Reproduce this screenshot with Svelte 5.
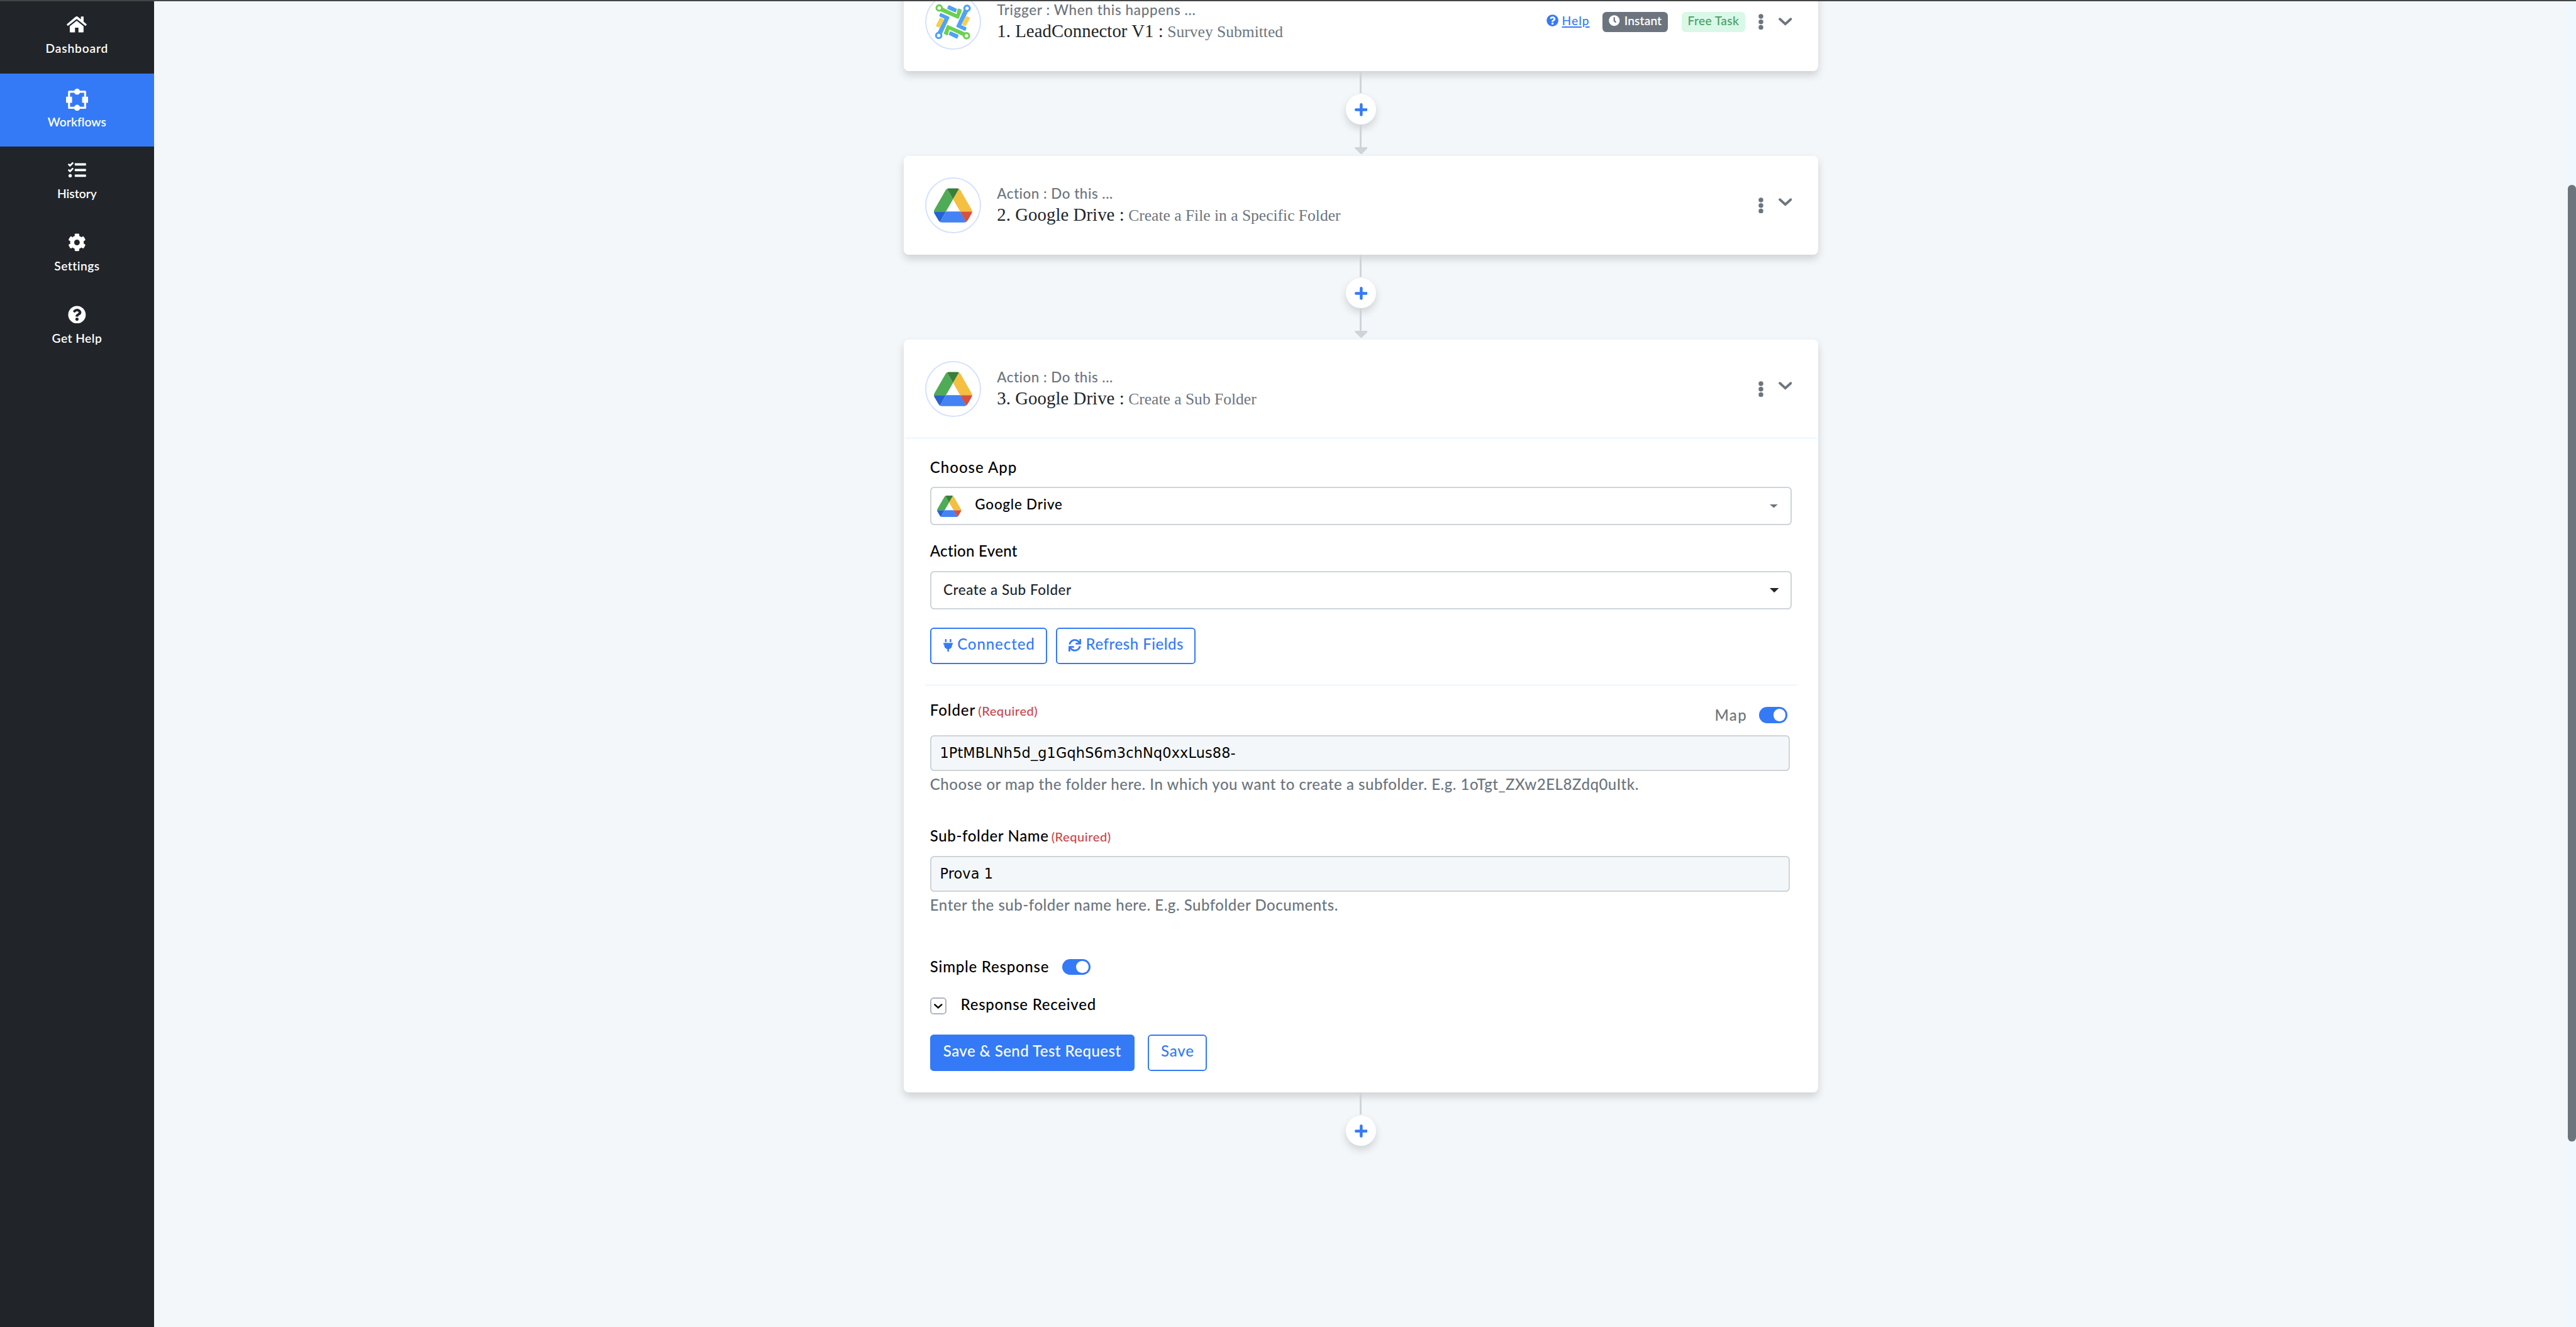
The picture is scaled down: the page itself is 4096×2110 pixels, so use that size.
<script>
  const nav = [
    { id: 'dashboard', label: 'Dashboard' },
    { id: 'workflows', label: 'Workflows', active: true },
    { id: 'history', label: 'History' },
    { id: 'settings', label: 'Settings' },
    { id: 'help', label: 'Get Help' }
  ];

  const helpPath =
    'M504 256c0 136.997-111.043 248-248 248S8 392.997 8 256C8 119.083 119.043 8 256 8s248 111.083 248 248zM262.655 90c-54.497 0-89.255 22.957-116.549 63.758-3.536 5.286-2.353 12.415 2.715 16.258l34.699 26.31c5.205 3.947 12.621 3.008 16.665-2.122 17.864-22.658 30.113-35.797 57.303-35.797 20.429 0 45.698 13.148 45.698 32.958 0 14.976-12.363 22.667-32.534 33.976C247.128 238.528 216 254.941 216 296v4c0 6.627 5.373 12 12 12h56c6.627 0 12-5.373 12-12v-1.333c0-28.462 83.186-29.647 83.186-106.667 0-58.002-60.165-102-116.531-102zM256 338c-25.365 0-46 20.635-46 46 0 25.364 20.635 46 46 46s46-20.636 46-46c0-25.365-20.635-46-46-46z';
</script>

{#snippet navIcon(id)}
  {#if id === 'dashboard'}
    <svg class="i-home" viewBox="0 0 40 32" fill="currentColor">
      <path d="M0.4 15.6 17.6 1q2.4-1.9 4.8 0l5.9 4.9V0.8q0-.6.6-.6h4.2q.6 0 .6.6v9.8l5.9 5q.6.5.1 1.1l-1.5 1.8q-.5.6-1.1.1L20 5.2 2.9 18.6q-.6.5-1.1-.1L.3 16.7q-.5-.6.1-1.1z" />
      <path d="M6.2 19.6 20 8.6l13.6 11V31q0 1-1 1h-9.2v-9.4h-6.8V32H7.2q-1 0-1-1z" />
    </svg>
  {:else if id === 'workflows'}
    <svg class="i-flow" viewBox="0 0 44 44" fill="currentColor">
      <rect x="6" y="6" width="32" height="32" fill="none" stroke="currentColor" stroke-width="4" stroke-linejoin="round" />
      <circle cx="22" cy="6" r="6" />
      <circle cx="22" cy="38" r="6" />
      <rect y="16" width="12" height="12" />
      <rect x="32" y="16" width="12" height="12" />
    </svg>
  {:else if id === 'history'}
    <svg class="i-nav" viewBox="0 0 512 512" fill="currentColor"><path d="M139.61 35.5a12 12 0 0 0-17 0L58.93 98.81l-22.7-22.12a12 12 0 0 0-17 0L3.53 92.41a12 12 0 0 0 0 17l47.59 47.4a12.78 12.78 0 0 0 17.61 0l15.59-15.62L156.52 69a12.09 12.09 0 0 0 .09-17zm0 159.19a12 12 0 0 0-17 0l-63.68 63.72-22.7-22.1a12 12 0 0 0-17 0L3.53 252a12 12 0 0 0 0 17L51 316.5a12.77 12.77 0 0 0 17.6 0l15.7-15.69 72.2-72.22a12 12 0 0 0 .09-16.9zM64 368c-26.49 0-48.59 21.5-48.59 48S37.53 464 64 464a48 48 0 0 0 0-96zm432 16H208a16 16 0 0 0-16 16v32a16 16 0 0 0 16 16h288a16 16 0 0 0 16-16v-32a16 16 0 0 0-16-16zm0-320H208a16 16 0 0 0-16 16v32a16 16 0 0 0 16 16h288a16 16 0 0 0 16-16V80a16 16 0 0 0-16-16zm0 160H208a16 16 0 0 0-16 16v32a16 16 0 0 0 16 16h288a16 16 0 0 0 16-16v-32a16 16 0 0 0-16-16z" /></svg>
  {:else if id === 'settings'}
    <svg class="i-nav" viewBox="0 0 512 512" fill="currentColor"><path d="M487.4 315.7l-42.6-24.6c4.3-23.2 4.3-47 0-70.2l42.6-24.6c4.9-2.8 7.1-8.6 5.5-14-11.1-35.6-30-67.8-54.7-94.6-3.8-4.1-10-5.1-14.8-2.3L380.8 110c-17.9-15.4-38.5-27.3-60.8-35.1V25.8c0-5.6-3.9-10.5-9.4-11.7-36.7-8.2-74.3-7.8-109.2 0-5.5 1.2-9.4 6.1-9.4 11.7V75c-22.2 7.9-42.8 19.8-60.8 35.1L88.7 85.5c-4.9-2.8-11-1.9-14.8 2.3-24.7 26.7-43.6 58.9-54.7 94.6-1.7 5.4.6 11.2 5.5 14L67.3 221c-4.3 23.2-4.3 47 0 70.2l-42.6 24.6c-4.9 2.8-7.1 8.6-5.5 14 11.1 35.6 30 67.8 54.7 94.6 3.8 4.1 10 5.1 14.8 2.3l42.6-24.6c17.9 15.4 38.5 27.3 60.8 35.1v49.2c0 5.6 3.9 10.5 9.4 11.7 36.7 8.2 74.3 7.8 109.2 0 5.5-1.2 9.4-6.1 9.4-11.7v-49.2c22.2-7.9 42.8-19.8 60.8-35.1l42.6 24.6c4.9 2.8 11 1.9 14.8-2.3 24.7-26.7 43.6-58.9 54.7-94.6 1.5-5.5-.7-11.3-5.6-14.1zM256 336c-44.1 0-80-35.9-80-80s35.9-80 80-80 80 35.9 80 80-35.9 80-80 80z" /></svg>
  {:else}
    <svg class="i-nav" viewBox="0 0 512 512" fill="currentColor"><path d={helpPath} /></svg>
  {/if}
{/snippet}

{#snippet drive(cls)}
  <svg class={cls} viewBox="0 0 87.3 78">
    <path fill="#2662d1" d="m6.6 66.85 3.85 6.65c.8 1.4 1.95 2.5 3.3 3.3l13.75-23.8h-27.5c0 1.55.4 3.1 1.2 4.5z" />
    <path fill="#4fab55" d="m43.65 25-13.75-23.8c-1.35.8-2.5 1.9-3.3 3.3l-25.4 44a9.06 9.06 0 0 0-1.2 4.5h27.5z" />
    <path fill="#d9503f" d="m73.55 76.8c1.35-.8 2.5-1.9 3.3-3.3l1.6-2.75 7.65-13.25c.8-1.4 1.2-2.95 1.2-4.5h-27.502l5.852 11.5z" />
    <path fill="#387f3a" d="m43.65 25 13.75-23.8c-1.35-.8-2.9-1.2-4.5-1.2h-18.5c-1.6 0-3.15.45-4.5 1.2z" />
    <path fill="#4483f5" d="m59.8 53h-32.3l-13.75 23.8c1.35.8 2.9 1.2 4.5 1.2h50.8c1.6 0 3.15-.45 4.5-1.2z" />
    <path fill="#f5bf42" d="m73.4 26.5-12.7-22c-.8-1.4-1.95-2.5-3.3-3.3l-13.75 23.8 16.15 28h27.45c0-1.55-.4-3.1-1.2-4.5z" />
  </svg>
{/snippet}

{#snippet leadHalf()}
  <path fill="#6cd04f" d="M118 38 214 83 221 53Q225 47 231 50L243 56Q248 59 245 65L229 106Q226 112 219 109L106 60Z" />
  <circle cx="111" cy="46" r="16" fill="#fff" stroke="#6cd04f" stroke-width="12" />
  <path fill="#4fa3f5" d="M172 30 214 50Q218 52 216 56L211 70Q209 75 204 72L162 53Q157 51 159 46L165 33Q168 28 172 30Z" />
  <path fill="#4fa3f5" d="M260 52 285 64 243 148 271 161Q275 163 273 168L269 179Q266 184 261 181L216 160Q211 158 214 152Z" />
  <circle cx="277" cy="48" r="16" fill="#fff" stroke="#4fa3f5" stroke-width="12" />
  <path fill="#f8cf4c" d="M276 96 290 101Q296 103 293 108L272 150Q269 156 264 153L250 147Q245 144 248 139L268 99Q271 94 276 96Z" />
{/snippet}

{#snippet dots()}
  <svg class="dots" viewBox="0 0 10 32" fill="#6c757d"><circle cx="5" cy="5" r="4.7" /><circle cx="5" cy="16" r="4.7" /><circle cx="5" cy="27" r="4.7" /></svg>
{/snippet}

{#snippet chevron(cls)}
  <svg class={cls} viewBox="0 0 27 16" fill="none" stroke="currentColor" stroke-width="4.8" stroke-linecap="round"><path d="M2.6 2.8 13.5 12.7 24.4 2.8" /></svg>
{/snippet}

{#snippet connector(arrow)}
  <div class="connector">
    <div class="line first"></div>
    <div class="plus">
      <svg viewBox="0 0 26 26" stroke="#347af7" stroke-width="5.6" stroke-linecap="round"><path d="M2.8 13H23.2M13 2.8V23.2" /></svg>
    </div>
    {#if arrow}
      <div class="line"></div>
      <svg class="arrow" viewBox="0 0 26 14"><path fill="#ced4d8" d="M2 0H24Q27 0 25 3L14.5 13Q13 14.6 11.5 13L1 3Q-1 0 2 0Z" /></svg>
    {/if}
  </div>
{/snippet}

{#snippet toggle()}
  <div class="toggle"><div class="knob"></div></div>
{/snippet}

<div class="app">
  <nav class="sidebar">
    {#each nav as item (item.id)}
      <div class="item {item.id}" class:active={item.active}>
        <div class="nav-icon">{@render navIcon(item.id)}</div>
        <div class="nav-label">{item.label}</div>
      </div>
    {/each}
  </nav>

  <main>
    <section class="card top">
      <header>
        <div class="logo">
          <svg class="lead" viewBox="27 -39 336 336">
            {@render leadHalf()}
            <g transform="rotate(180 192.5 129)">{@render leadHalf()}</g>
          </svg>
        </div>
        <div class="titles">
          <div class="kind trigger">Trigger : When this happens ...</div>
          <div class="name lead-name">1. LeadConnector V1 : <span>Survey Submitted</span></div>
        </div>
        <div class="tools">
          <div class="help-link">
            <svg viewBox="0 0 512 512" fill="currentColor"><path d={helpPath} /></svg>
            <span>Help</span>
          </div>
          <div class="badge instant">
            <svg viewBox="0 0 512 512" fill="currentColor"><path d="M256,8C119,8,8,119,8,256S119,504,256,504,504,393,504,256,393,8,256,8Zm92.49,313h0l-20,25a16,16,0,0,1-22.49,2.5h0l-67-49.72a40,40,0,0,1-15-31.23V112a16,16,0,0,1,16-16h32a16,16,0,0,1,16,16V256l58,42.5A16,16,0,0,1,348.49,321Z" /></svg>
            <span>Instant</span>
          </div>
          <div class="badge free">Free Task</div>
          {@render dots()}
          {@render chevron('chev')}
        </div>
      </header>
    </section>

    {@render connector(true)}

    <section class="card">
      <header>
        <div class="logo">{@render drive('gd')}</div>
        <div class="titles">
          <div class="kind">Action : Do this ...</div>
          <div class="name">2. Google Drive : <span>Create a File in a Specific Folder</span></div>
        </div>
        <div class="tools">
          {@render dots()}
          {@render chevron('chev up')}
        </div>
      </header>
    </section>

    {@render connector(true)}

    <section class="card">
      <header>
        <div class="logo">{@render drive('gd')}</div>
        <div class="titles">
          <div class="kind">Action : Do this ...</div>
          <div class="name">3. Google Drive : <span>Create a Sub Folder</span></div>
        </div>
        <div class="tools">
          {@render dots()}
          {@render chevron('chev up')}
        </div>
      </header>
      <div class="rule"></div>

      <div class="body">
        <div class="label choose">Choose App</div>
        <div class="select app-select">
          {@render drive('gd-small')}
          <span>Google Drive</span>
          <svg class="caret" viewBox="0 0 16 7"><path fill="#6c757d" d="M0 0H16L8 7Z" /></svg>
        </div>

        <div class="label event">Action Event</div>
        <div class="select event-select">
          <span>Create a Sub Folder</span>
          <svg class="caret dark" viewBox="0 0 18 9"><path fill="#212529" d="M0 0H18L9 9Z" /></svg>
        </div>

        <div class="buttons connect">
          <button class="outline connected">
            <svg class="plug" viewBox="0 0 384 512" fill="currentColor"><path d="M320,32a32,32,0,0,0-64,0v96h64Zm48,128H16A16,16,0,0,0,0,176v32a16,16,0,0,0,16,16H32v32A160.07,160.07,0,0,0,160,412.8V512h64V412.8A160.07,160.07,0,0,0,352,256V224h16a16,16,0,0,0,16-16V176A16,16,0,0,0,368,160ZM128,32a32,32,0,0,0-64,0v96h64Z" /></svg>
            <span>Connected</span>
          </button>
          <button class="outline refresh">
            <svg class="sync" viewBox="0 0 512 512" fill="currentColor"><path d="M440.65 12.57l4 82.77A247.16 247.16 0 0 0 255.83 8C134.73 8 33.91 94.92 12.29 209.82A12 12 0 0 0 24.09 224h49.05a12 12 0 0 0 11.67-9.26 175.91 175.91 0 0 1 317-56.94l-101.46-4.86a12 12 0 0 0-12.57 12v47.41a12 12 0 0 0 12 12H500a12 12 0 0 0 12-12V12a12 12 0 0 0-12-12h-47.37a12 12 0 0 0-11.98 12.57zM255.83 432a175.61 175.61 0 0 1-146-77.8l101.8 4.87a12 12 0 0 0 12.57-12v-47.4a12 12 0 0 0-12-12H12a12 12 0 0 0-12 12V500a12 12 0 0 0 12 12h47.35a12 12 0 0 0 12-12.6l-4.15-82.57A247.17 247.17 0 0 0 255.83 504c121.11 0 221.93-86.92 243.55-201.82a12 12 0 0 0-11.8-14.18h-49.05a12 12 0 0 0-11.67 9.26A175.86 175.86 0 0 1 255.83 432z" /></svg>
            <span>Refresh Fields</span>
          </button>
        </div>

        <div class="rule inner"></div>

        <div class="field-head">
          <div class="label folder">Folder<small>(Required)</small></div>
          <div class="map"><span>Map</span>{@render toggle()}</div>
        </div>
        <div class="input">1PtMBLNh5d_g1GqhS6m3chNq0xxLus88-</div>
        <p class="hint">Choose or map the folder here. In which you want to create a subfolder. E.g. 1oTgt_ZXw2EL8Zdq0uItk.</p>

        <div class="label sub">Sub-folder Name<small>(Required)</small></div>
        <div class="input">Prova 1</div>
        <p class="hint">Enter the sub-folder name here. E.g. Subfolder Documents.</p>

        <div class="simple"><span class="label">Simple Response</span>{@render toggle()}</div>
        <div class="received">
          <div class="check">{@render chevron('mini')}</div>
          <span class="label">Response Received</span>
        </div>

        <div class="buttons submit">
          <button class="solid">Save &amp; Send Test Request</button>
          <button class="outline save">Save</button>
        </div>
      </div>
    </section>

    {@render connector(false)}
  </main>

  <aside class="scroll"><div class="thumb"></div></aside>
  <div class="strip"></div>
</div>

<style>
  :global(body) {
    overflow: hidden;
    background: #f3f7fa;
  }

  /* Laid out on a 5120px canvas, drawn at four fifths. */
  .app {
    zoom: 0.8;
    position: relative;
    display: flex;
    width: 5120px;
    height: 2638px;
    overflow: hidden;
    background: #f3f7fa;
    font-family: Lato, 'Open Sans', sans-serif;
    font-weight: 500;
    color: #000;
  }

  .app * {
    box-sizing: border-box;
  }

  svg {
    display: block;
    flex: none;
  }

  .strip {
    position: absolute;
    inset: 0 0 auto 0;
    height: 2.5px;
    background: #444546;
  }

  /* Sidebar */
  .sidebar {
    flex: none;
    width: 306px;
    background: #212529;
    color: #fff;
  }

  .item {
    display: flex;
    flex-direction: column;
    align-items: center;
    height: 143.5px;
    padding-top: 24px;
  }

  .item.dashboard {
    height: 146px;
    padding-top: 26px;
  }

  .item.workflows {
    height: 145px;
    padding-top: 29px;
  }

  .item.active {
    background: #347af7;
  }

  .nav-icon {
    display: flex;
    align-items: center;
    height: 46px;
    margin-bottom: 7.7px;
  }

  .workflows .nav-icon {
    margin-bottom: 5px;
  }

  .i-home {
    width: 40px;
    height: 32px;
  }

  .i-flow {
    width: 44px;
    height: 44px;
  }

  .i-nav {
    width: 36px;
    height: 36px;
  }

  .nav-label {
    font-size: 24px;
    line-height: 32px;
    letter-spacing: 0.6px;
    font-weight: 600;
  }

  .dashboard .nav-label {
    letter-spacing: 1.04px;
  }

  .workflows .nav-label,
  .history .nav-label {
    letter-spacing: 0.05px;
  }

  /* Workflow column */
  main {
    flex: none;
    display: flex;
    flex-direction: column;
    align-items: center;
    width: 4798px;
  }

  .card {
    flex: none;
    width: 1817px;
    background: #fff;
    border-radius: 10px;
    box-shadow: 0 8px 16px rgba(0, 0, 0, 0.15);
  }

  .card.top {
    margin-top: -55px;
  }

  header {
    display: flex;
    align-items: center;
    height: 196px;
    padding: 0 52px 0 42px;
  }

  .logo {
    display: flex;
    align-items: center;
    justify-content: center;
    width: 112px;
    height: 112px;
    margin-right: 31px;
    border: 2.5px solid #d6e2fc;
    border-radius: 50%;
  }

  .gd {
    width: 76px;
    height: 69px;
  }

  .lead {
    width: 112px;
    height: 112px;
  }

  .titles {
    margin-top: 2px;
  }

  .kind {
    font-size: 28px;
    line-height: 36px;
    letter-spacing: 0.66px;
    color: #6c757d;
  }

  .kind.trigger {
    letter-spacing: 0.83px;
  }

  .name {
    font: 400 36px/48px 'Liberation Serif', serif;
    letter-spacing: 0.08px;
    color: #212529;
    white-space: nowrap;
  }

  .name span {
    font-size: 32px;
    line-height: 1;
    letter-spacing: -0.04px;
    margin-left: -1px;
    color: #6c757d;
  }

  .tools {
    display: flex;
    align-items: center;
    margin-left: auto;
    color: #6c757d;
  }

  .dots {
    width: 10px;
    height: 32px;
  }

  .chev {
    width: 27px;
    height: 16px;
    margin-left: 29px;
  }

  .chev.up {
    margin-bottom: 12px;
  }

  .help-link {
    display: flex;
    align-items: center;
    margin: 0 26px 4px 0;
    color: #347af7;
    font-size: 24px;
    line-height: 32px;
  }

  .help-link svg {
    width: 24px;
    height: 24px;
    margin-right: 7px;
  }

  .help-link span {
    letter-spacing: 1.3px;
    text-decoration: underline;
    text-decoration-thickness: 2px;
    text-underline-offset: 3px;
  }

  .badge {
    display: flex;
    align-items: center;
    height: 40px;
    margin: 2px 27px 0 0;
    padding: 0 12px 6px;
    border-radius: 8px;
    font-size: 24px;
    line-height: 34px;
  }

  .instant {
    width: 130px;
    background: #6c757d;
    color: #fff;
    font-weight: 600;
    letter-spacing: 0.1px;
  }

  .instant svg {
    width: 22px;
    height: 22px;
    margin-right: 9px;
  }

  .free {
    width: 126px;
    background: #d9f8e8;
    color: #4a9d5e;
    letter-spacing: 0.46px;
    white-space: nowrap;
  }

  /* Connectors between cards */
  .connector {
    flex: none;
    display: flex;
    flex-direction: column;
    align-items: center;
    height: 169px;
  }

  .line {
    width: 3.75px;
    height: 44px;
    background: #ced4d8;
  }

  .line.first {
    margin-bottom: 3px;
  }

  .plus {
    display: flex;
    align-items: center;
    justify-content: center;
    width: 60px;
    height: 60px;
    border-radius: 50%;
    background: #fff;
    box-shadow: 0 8px 16px rgba(0, 0, 0, 0.15);
  }

  .plus svg {
    width: 26px;
    height: 26px;
  }

  .arrow {
    width: 26px;
    height: 14px;
  }

  .rule {
    height: 4px;
    margin: -2px 2px 0;
    background: #f0f8ff;
  }

  .rule.inner {
    margin: 40px -10px 27.4px;
  }

  /* Form */
  .body {
    padding: 35.4px 52px 42px;
  }

  .label {
    font-size: 30px;
    line-height: 40px;
    letter-spacing: 0.8px;
    white-space: nowrap;
  }

  .label.choose {
    letter-spacing: 1.26px;
  }

  .label.event {
    margin-top: 31.4px;
    letter-spacing: 0.38px;
  }

  .label.folder {
    letter-spacing: 1.15px;
  }

  .label small {
    margin-left: 5px;
    font-size: 25px;
    line-height: 1;
    letter-spacing: 0.72px;
    color: #cb444a;
  }

  .select {
    display: flex;
    align-items: center;
    height: 76px;
    margin-top: 19.6px;
    border: 2.5px solid #ced4da;
    border-radius: 8px;
    font-size: 28px;
  }

  .app-select {
    padding: 0 25.5px 0 12px;
  }

  .app-select span {
    margin: 0 0 7px 27px;
    letter-spacing: 1px;
  }

  .event-select {
    padding: 0 23.5px 0 24px;
    color: #212529;
  }

  .event-select span {
    margin-bottom: 2px;
    letter-spacing: 0.71px;
  }

  .gd-small {
    width: 48px;
    height: 43px;
  }

  .caret {
    width: 16px;
    height: 7px;
    margin-left: auto;
  }

  .caret.dark {
    width: 18px;
    height: 9px;
  }

  .buttons {
    display: flex;
  }

  .connect {
    gap: 17px;
    margin-top: 36px;
  }

  .submit {
    gap: 27px;
    margin-top: 39.6px;
  }

  button {
    display: flex;
    align-items: center;
    justify-content: center;
    height: 73px;
    margin: 0;
    padding: 0 0 8px;
    border: 2.5px solid #347af7;
    border-radius: 7px;
    font: 500 30px/40px Lato, 'Open Sans', sans-serif;
    white-space: nowrap;
  }

  .outline {
    background: #fff;
    color: #347af7;
  }

  .outline svg {
    margin: 5px 9px 0 0;
  }

  .connected {
    width: 233px;
    padding-left: 2px;
    letter-spacing: 1.15px;
  }

  .refresh {
    width: 278px;
    padding-left: 2px;
    letter-spacing: 0.66px;
  }

  .plug {
    width: 19px;
    height: 25px;
  }

  .sync {
    width: 25px;
    height: 25px;
  }

  .solid {
    width: 406px;
    background: #347af7;
    color: #fff;
    letter-spacing: 0.58px;
  }

  .save {
    width: 117px;
    padding-left: 1px;
    letter-spacing: 1px;
  }

  .field-head {
    display: flex;
    justify-content: space-between;
    align-items: flex-start;
    height: 40px;
    margin-bottom: 29.6px;
  }

  .map {
    display: flex;
    align-items: center;
    margin: 10px 9px 0 0;
    color: #6c757d;
    font-size: 30px;
    line-height: 40px;
    letter-spacing: 1.7px;
  }

  .map .toggle {
    margin-left: 24px;
  }

  .toggle {
    display: flex;
    align-items: center;
    justify-content: flex-end;
    width: 56px;
    height: 32px;
    padding-right: 4px;
    border-radius: 16px;
    background: #347af7;
  }

  .knob {
    width: 24px;
    height: 24px;
    border-radius: 50%;
    background: #fff;
  }

  .input {
    width: 1709px;
    height: 72px;
    padding-left: 17px;
    border: 2.5px solid #ced4d8;
    border-radius: 8px;
    background: #f3f7fa;
    font: 400 28px/67px 'DejaVu Sans', sans-serif;
    letter-spacing: 0.18px;
  }

  .hint {
    margin: 5.4px 0 0;
    font-size: 30px;
    line-height: 40px;
    letter-spacing: 0.66px;
    color: #6c757d;
    white-space: nowrap;
  }

  .label.sub {
    margin: 63px 0 19.6px;
  }

  .simple {
    display: flex;
    align-items: center;
    margin-top: 83px;
  }

  .simple .label {
    letter-spacing: 0.97px;
  }

  .simple .toggle {
    margin: 1px 0 0 26px;
  }

  .received {
    display: flex;
    align-items: center;
    height: 40px;
    margin-top: 35px;
  }

  .received .label {
    margin-left: 28px;
    letter-spacing: 0.95px;
  }

  .check {
    display: flex;
    align-items: center;
    justify-content: center;
    width: 33px;
    height: 34px;
    margin-top: 7px;
    border: 2.5px solid #adb5bd;
    border-radius: 7px;
  }

  .mini {
    width: 17px;
    height: 10px;
  }

  /* Page scrollbar */
  .scroll {
    flex: none;
    width: 16px;
    padding-top: 368px;
    background: #f0f8ff;
  }

  .thumb {
    height: 1901px;
    border-radius: 8px;
    background: #6c757d;
  }
</style>
